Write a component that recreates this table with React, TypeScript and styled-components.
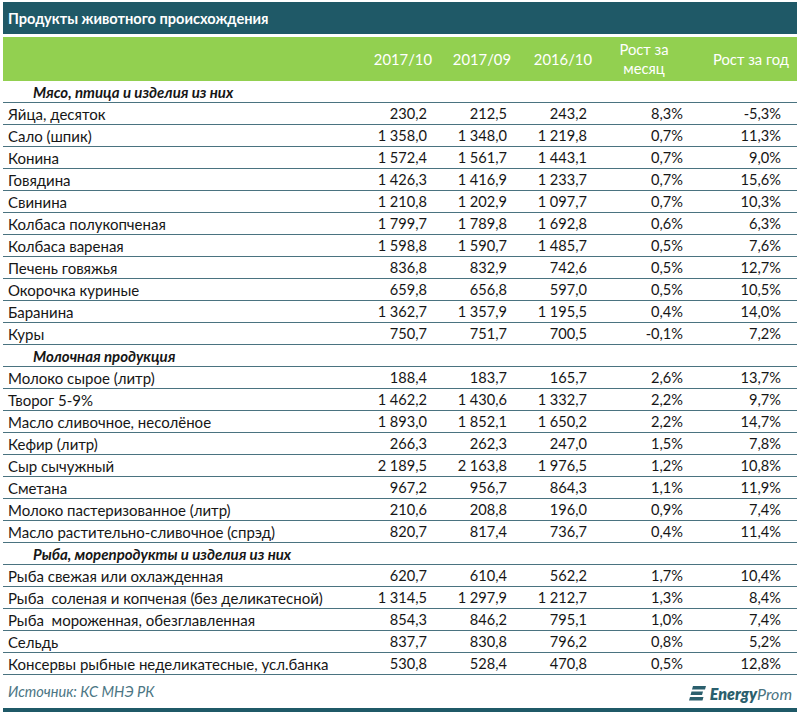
import React from "react";
import styled, { createGlobalStyle } from "styled-components";

const Global = createGlobalStyle`
  html, body { margin: 0; padding: 0; background: #fff; }
  body { font-family: Lato, "Open Sans", "Liberation Sans", sans-serif; }
`;

const COLS = "352px 80px 80px 80px 98px 104px";
const LINE = "#4a7380";

const Frame = styled.div`
  width: 794px;
  margin-left: 3px;
  padding-top: 2px;
  display: flex;
  flex-direction: column;
`;

const TitleBar = styled.div`
  height: 32px;
  background: #1f5967;
  color: #fff;
  font-weight: 700;
  font-size: 14.6px;
  display: flex;
  align-items: center;
  padding-left: 5px;
  margin-bottom: 3px;
`;

const HeadRow = styled.div`
  display: grid;
  grid-template-columns: ${COLS};
  height: 44px;
  background: #92d050;
  color: #fff;
  font-size: 14.8px;
  line-height: 19px;
`;

const HeadCell = styled.div<{ $align: "right" | "center"; $pad: number }>`
  display: flex;
  align-items: center;
  justify-content: ${(p) => (p.$align === "right" ? "flex-end" : "center")};
  text-align: ${(p) => p.$align};
  padding-right: ${(p) => p.$pad}px;
`;

const Row = styled.div`
  display: grid;
  grid-template-columns: ${COLS};
  height: 22px;
  box-sizing: border-box;
  border-bottom: 1px solid ${LINE};
  color: #161616;
  font-size: 14.6px;
  align-items: center;
`;

const NameCell = styled.div`
  padding-left: 5px;
  font-size: 15px;
  white-space: pre;
  overflow: hidden;
`;

const NumCell = styled.div<{ $pad: number }>`
  text-align: right;
  padding-right: ${(p) => p.$pad}px;
  white-space: nowrap;
`;

const CatRow = styled.div`
  height: 22px;
  box-sizing: border-box;
  border-bottom: 1px solid ${LINE};
  display: flex;
  align-items: center;
  padding-left: 30px;
  font-weight: 700;
  font-style: italic;
  font-size: 15px;
  color: #161616;
`;

const Footer = styled.div`
  height: 33px;
  display: flex;
  align-items: center;
  justify-content: space-between;
  padding: 0 5px;
  border-bottom: 4px solid #1f5967;
`;

const Source = styled.div`
  font-style: italic;
  font-size: 14.6px;
  color: #4c7684;
`;

const Logo = styled.div`
  display: flex;
  align-items: center;
  gap: 4px;
  color: #2b5f6d;
  font-size: 16px;
  font-style: italic;
  margin-top: 4px;
`;

const LogoStrong = styled.span`
  font-weight: 800;
`;

const LogoLight = styled.span`
  font-weight: 400;
  color: #4a7482;
`;

type Item = { kind: "cat"; name: string } | { kind: "row"; v: string[] };

const nb = (s: string) => s.replace(/ /g, "\u00a0");

const data: Item[] = [
  { kind: "cat", name: "Мясо, птица и изделия из них" },
  { kind: "row", v: ["Яйца, десяток", "230,2", "212,5", "243,2", "8,3%", "-5,3%"] },
  { kind: "row", v: ["Сало (шпик)", "1 358,0", "1 348,0", "1 219,8", "0,7%", "11,3%"] },
  { kind: "row", v: ["Конина", "1 572,4", "1 561,7", "1 443,1", "0,7%", "9,0%"] },
  { kind: "row", v: ["Говядина", "1 426,3", "1 416,9", "1 233,7", "0,7%", "15,6%"] },
  { kind: "row", v: ["Свинина", "1 210,8", "1 202,9", "1 097,7", "0,7%", "10,3%"] },
  { kind: "row", v: ["Колбаса полукопченая", "1 799,7", "1 789,8", "1 692,8", "0,6%", "6,3%"] },
  { kind: "row", v: ["Колбаса вареная", "1 598,8", "1 590,7", "1 485,7", "0,5%", "7,6%"] },
  { kind: "row", v: ["Печень говяжья", "836,8", "832,9", "742,6", "0,5%", "12,7%"] },
  { kind: "row", v: ["Окорочка куриные", "659,8", "656,8", "597,0", "0,5%", "10,5%"] },
  { kind: "row", v: ["Баранина", "1 362,7", "1 357,9", "1 195,5", "0,4%", "14,0%"] },
  { kind: "row", v: ["Куры", "750,7", "751,7", "700,5", "-0,1%", "7,2%"] },
  { kind: "cat", name: "Молочная продукция" },
  { kind: "row", v: ["Молоко сырое (литр)", "188,4", "183,7", "165,7", "2,6%", "13,7%"] },
  { kind: "row", v: ["Творог 5-9%", "1 462,2", "1 430,6", "1 332,7", "2,2%", "9,7%"] },
  { kind: "row", v: ["Масло сливочное, несолёное", "1 893,0", "1 852,1", "1 650,2", "2,2%", "14,7%"] },
  { kind: "row", v: ["Кефир (литр)", "266,3", "262,3", "247,0", "1,5%", "7,8%"] },
  { kind: "row", v: ["Сыр сычужный", "2 189,5", "2 163,8", "1 976,5", "1,2%", "10,8%"] },
  { kind: "row", v: ["Сметана", "967,2", "956,7", "864,3", "1,1%", "11,9%"] },
  { kind: "row", v: ["Молоко пастеризованное (литр)", "210,6", "208,8", "196,0", "0,9%", "7,4%"] },
  { kind: "row", v: ["Масло растительно-сливочное (спрэд)", "820,7", "817,4", "736,7", "0,4%", "11,4%"] },
  { kind: "cat", name: "Рыба, морепродукты и изделия из них" },
  { kind: "row", v: ["Рыба свежая или охлажденная", "620,7", "610,4", "562,2", "1,7%", "10,4%"] },
  { kind: "row", v: ["Рыба  соленая и копченая (без деликатесной)", "1 314,5", "1 297,9", "1 212,7", "1,3%", "8,4%"] },
  { kind: "row", v: ["Рыба  мороженная, обезглавленная", "854,3", "846,2", "795,1", "1,0%", "7,4%"] },
  { kind: "row", v: ["Сельдь", "837,7", "830,8", "796,2", "0,8%", "5,2%"] },
  { kind: "row", v: ["Консервы рыбные неделикатесные, усл.банка", "530,8", "528,4", "470,8", "0,5%", "12,8%"] },
];

const numPads = [8, 8, 8, 10, 16];

const LogoMark = () => (
  <svg width="17" height="16" viewBox="0 0 17 16" aria-hidden>
    <path d="M4 0 H17 L16 3.5 H3 Z" fill="#2b5f6d" />
    <path d="M2.5 5.5 H14 L13 9 H1.5 Z" fill="#2b5f6d" />
    <path d="M1 11 H14.5 L13.5 14.5 H0 Z" fill="#2b5f6d" />
  </svg>
);

export default function App() {
  return (
    <>
      <Global />
      <Frame>
        <TitleBar>Продукты животного происхождения</TitleBar>
        <HeadRow>
          <HeadCell $align="right" $pad={0} />
          <HeadCell $align="right" $pad={3}>2017/10</HeadCell>
          <HeadCell $align="right" $pad={4}>2017/09</HeadCell>
          <HeadCell $align="right" $pad={3}>2016/10</HeadCell>
          <HeadCell $align="center" $pad={0}>
            Рост за
            <br />
            месяц
          </HeadCell>
          <HeadCell $align="right" $pad={8}>Рост за год</HeadCell>
        </HeadRow>
        {data.map((it, i) =>
          it.kind === "cat" ? (
            <CatRow key={i}>{it.name}</CatRow>
          ) : (
            <Row key={i}>
              <NameCell>{it.v[0]}</NameCell>
              {it.v.slice(1).map((n, j) => (
                <NumCell key={j} $pad={numPads[j]}>
                  {nb(n)}
                </NumCell>
              ))}
            </Row>
          )
        )}
        <Footer>
          <Source>Источник: КС МНЭ РК</Source>
          <Logo>
            <LogoMark />
            <span>
              <LogoStrong>Energy</LogoStrong>
              <LogoLight>Prom</LogoLight>
            </span>
          </Logo>
        </Footer>
      </Frame>
    </>
  );
}
